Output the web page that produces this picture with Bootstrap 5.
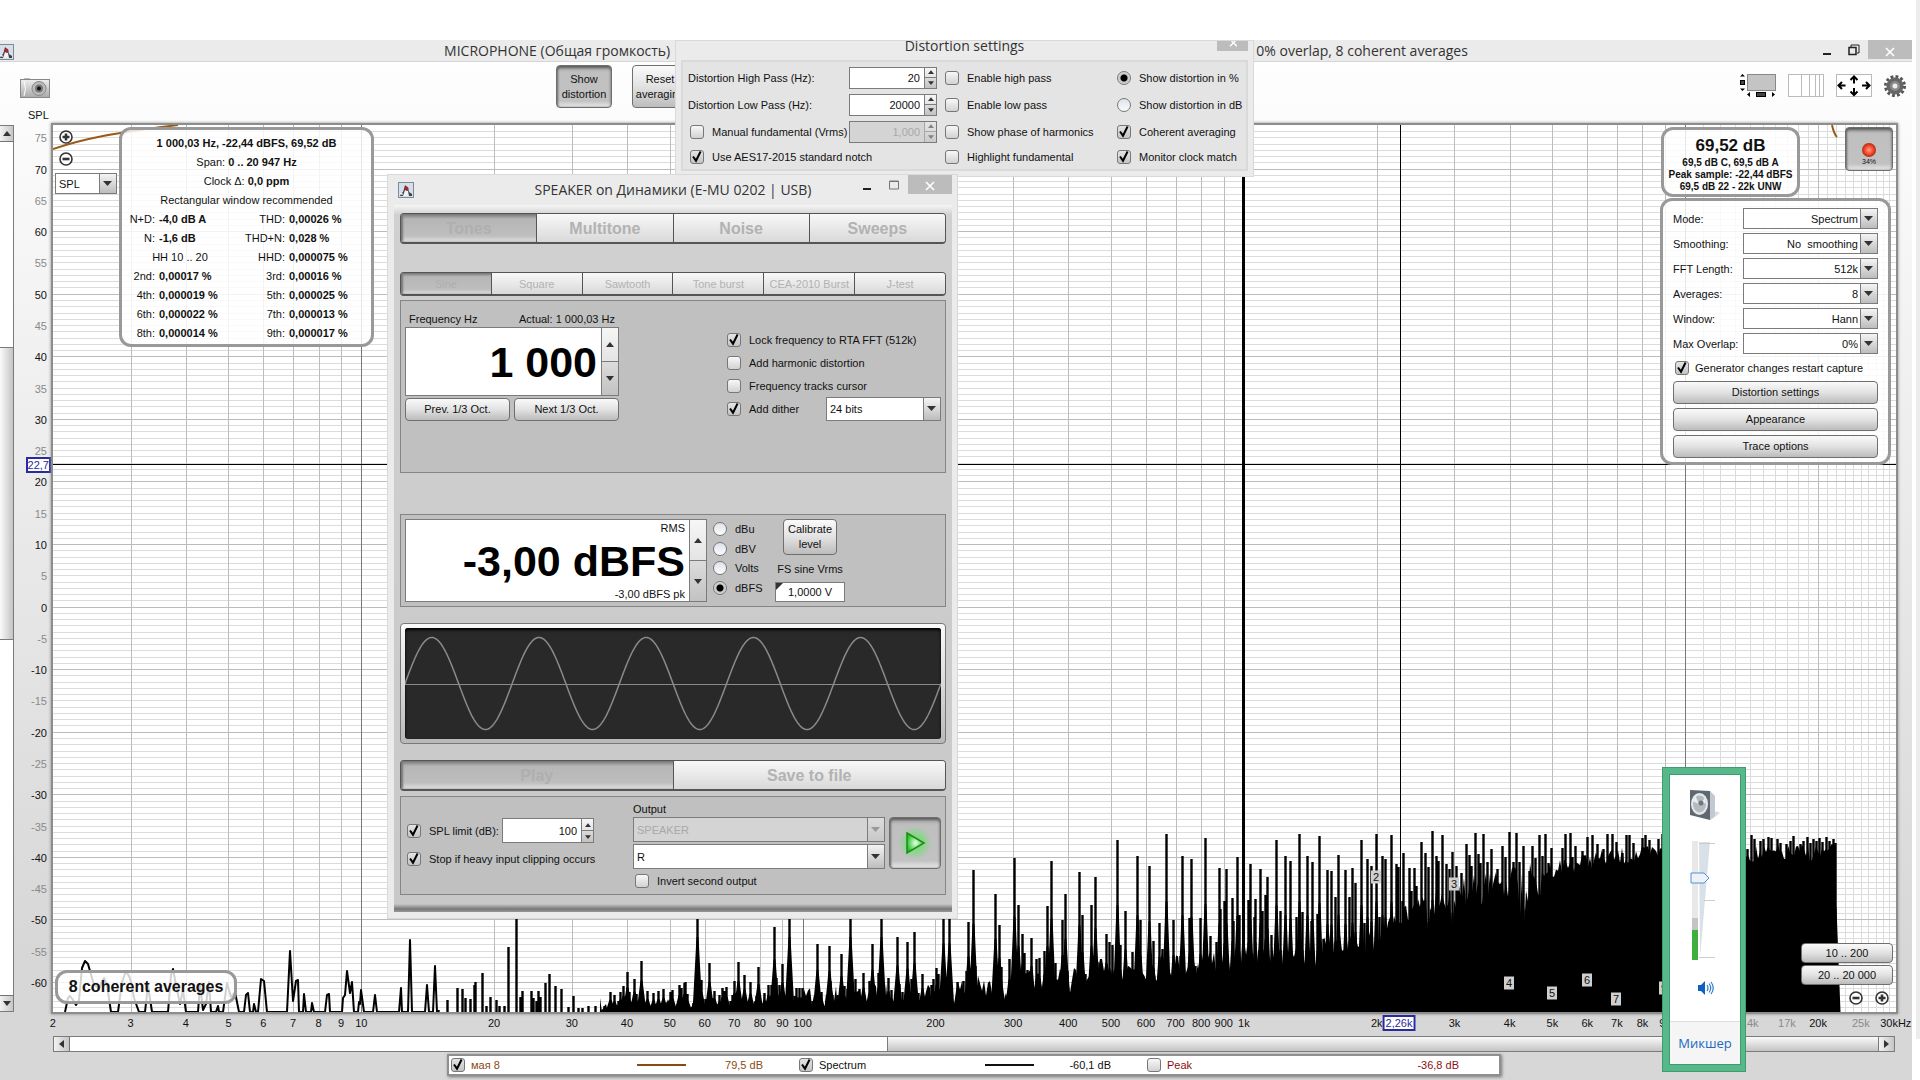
<!DOCTYPE html>
<html lang="en">
<head>
<meta charset="utf-8">
<meta name="viewport" content="width=device-width, initial-scale=1">
<title>RTA - Spectrum</title>
<link href="https://cdn.jsdelivr.net/npm/bootstrap@5.3.0/dist/css/bootstrap.min.css" rel="stylesheet">
<style>
:root{--edge:#7b7b7b;--btn:linear-gradient(#fafafa,#e2e2e2 50%,#bcbcbc);--ui:"Liberation Sans",Arial,sans-serif;--cap:"Open Sans","Noto Sans",sans-serif}
body{font:11px/16px var(--ui);color:#111;background:#fff;min-height:100vh;overflow:hidden}
button,input,select{font:inherit;color:inherit}
.shell{min-height:100vh;padding-top:40px;padding-right:8px}
.mainwin{background:linear-gradient(#fff,#f1f1f1 30%,#d7d7d7 88%)}
.edge-strip{right:0;top:0;width:4px;height:1039px;background:#ececec}
.capbar{height:22px;background:#ebebeb;border-bottom:1px solid #d6d6d6;font:14px/22px var(--cap);color:#333}
.capgap{gap:586px}
.winx{background:#bcbcbc;border:0;width:44px;height:19px;padding:0}
.winb{background:none;border:0;padding:0;line-height:0}
.tools{height:61px}
.toolset{margin:3px 0 0 506px}
.icons{padding:12px 2px 0 0}
.rbtn{background:var(--btn);border:1px solid #6f6f6f;border-radius:4px;padding:0;color:#111;line-height:15px}
.rbtn.pressed{background:linear-gradient(#aaa,#bfbfbf 15%,#c2c2c2 85%,#e9e9e9);box-shadow:inset 0 2px 3px #5a5a5a,inset 1px 0 2px #888}
.tbtn{width:56px;height:43px}
.spl-title{margin-left:28px}
.vscroll{width:14px;border:1px solid var(--edge);border-left:0;background:#fff;margin:2px 0}
.vscroll button,.hscroll button{border:0;padding:0;line-height:0;background:linear-gradient(90deg,#f2f2f2,#c6c6c6)}
.vscroll button{height:15px}
.vthumb{border:1px solid var(--edge);border-width:1px 0;background:linear-gradient(90deg,#fafafa,#c4c4c4)}
.yaxis{width:37px}
.yaxis span{right:4px;transform:translateY(-50%)}
.yaxis .cursor-tag{right:0}
.dim{color:#8a8a8a}
.plotbox{border:2px solid #8d8d8d;box-shadow:0 0 3px #888;background:#fff;margin-right:14px}
.plotbox>svg{width:100%;height:100%}
.xaxis{height:22px;margin:0 16px 0 53px}
.xaxis span{top:2px;line-height:14px;transform:translateX(-50%)}
.cursor-tag{border:2px solid #2a2aa0;background:#fff;color:#2a2aa0;line-height:12px!important}
.xaxis .cursor-tag{top:1px;padding:0 1px}
.hscroll{height:16px;border:1px solid var(--edge);background:#fff;margin:0 17px 0 53px}
.hscroll button{width:15px}
.hthumb{border:1px solid var(--edge);border-width:0 1px;background:linear-gradient(#fafafa,#c4c4c4)}
.legendbox{width:1054px;height:22px;margin:2px auto 4px 447px;padding-right:6px;border:2px solid #8f8f8f;box-shadow:1px 1px 3px #777;background:#fff}
.legendbox>div{padding:0 34px 0 2px}
.legendbox label{gap:6px}
.lvl{width:77px;text-align:right}
.swatch{width:49px;height:2px;background:currentColor}
.brown{color:#8a4a10}.darkred{color:#8c1010}
.tick{appearance:none;width:14px;height:14px;margin:0;flex:none;border:1px solid #777;border-radius:3px;background:linear-gradient(#f8f8f8,#d2d2d2)}
.tick:checked{background:url("data:image/svg+xml,%3Csvg xmlns='http://www.w3.org/2000/svg' viewBox='0 0 14 14'%3E%3Cpath d='M3 6.5l3 4.2L10.6 1.5' fill='none' stroke='%23000' stroke-width='2'/%3E%3C/svg%3E") center/14px,linear-gradient(#e4e4e4,#c4c4c4)}
.dot{appearance:none;width:14px;height:14px;margin:0;flex:none;border:1px solid #777;border-radius:50%;background:linear-gradient(#dfe3ea,#fafbfd)}
.dot:checked{background:radial-gradient(circle,#000 0 3px,#c4c4c4 4px,#f0f0f0)}
.pick{appearance:none;border:1px solid var(--edge);border-radius:0;padding:0 20px 0 3px;color:#111;height:21px;opacity:1;
 background:url("data:image/svg+xml,%3Csvg xmlns='http://www.w3.org/2000/svg' width='9' height='6'%3E%3Cpath d='M0 0h9L4.500 5z' fill='%23333'/%3E%3C/svg%3E") right 4px center no-repeat,linear-gradient(#f4f4f4,#bdbdbd) right/16px 100% no-repeat,linear-gradient(var(--edge),var(--edge)) right 16px top/1px 100% no-repeat,#fff}
.pick.rt{text-align-last:right;padding-right:19px}
.pick.tall{height:25px}
.pick:disabled{color:#a9a9a9;background:url("data:image/svg+xml,%3Csvg xmlns='http://www.w3.org/2000/svg' width='9' height='6'%3E%3Cpath d='M0 0h9L4.500 5z' fill='%23999'/%3E%3C/svg%3E") right 4px center no-repeat,linear-gradient(#dcdcdc,#c8c8c8) right/16px 100% no-repeat,linear-gradient(var(--edge),var(--edge)) right 16px top/1px 100% no-repeat,#d4d4d4}
.spin{border:1px solid var(--edge);background:#fff}
.spin input{border:0;background:none;text-align:right;width:0;min-width:0;padding:0 4px;outline:0}
.spin .arrows{flex:none;width:12px;border-left:1px solid var(--edge);display:grid;grid-template-columns:1fr}
.spin .arrows.wide{width:17px}
.arrows button{border:0;padding:0;line-height:0;background:linear-gradient(#f6f6f6,#e4e4e4)}
.arrows button+button{border-top:1px solid var(--edge);background:linear-gradient(#dcdcdc,#c2c2c2)}
.spin.off{background:#d4d4d4;color:#a9a9a9}
.ovl{border:3px solid #999;border-radius:12px;background:rgba(255,255,255,.82)}
.zoomset{padding:5px 0 0 2px}
.zoomset .pick{width:62px;margin-top:7px}
.infobox{left:66px;top:2px;width:255px;height:220px;padding-top:4px;line-height:19px}
.infogrid{display:grid;grid-template-columns:33px 79px 43px 1fr;column-gap:4px}
.infogrid .hh{grid-column:1/3;text-align:center}
.levelbox{right:96px;top:2px;width:139px;height:70px;font:bold 10px/12px var(--ui);padding-top:5px}
.levelbig{font-size:17px;line-height:22px}
.recbtn{right:3px;top:2px;width:48px;height:44px;font-size:7px;line-height:8px}
.optbox{right:5px;top:73px;width:231px;height:267px;padding:7px 10px}
.optbox .pick{width:135px}
.optrow{height:21px;margin-bottom:4px}
.optcheck{height:19px;margin-bottom:4px;padding-left:2px;gap:6px}
.wbtn{height:23px}
.avgbox{left:2px;bottom:8px;width:182px;height:34px;font:bold 16px/28px var(--ui)}
.zoomb{background:none;border:0;padding:0;line-height:0}
.rangebtns{right:3px;bottom:7px;width:92px;row-gap:2px}
.rangebtns .rbtn{height:20px}
.harm{background:#cfcfcf;width:10px;height:13px;line-height:13px;transform:translate(-50%,-50%)}
.win{background:#ebebeb;border:1px solid #d9d9d9}
.capt{font-family:var(--cap);font-size:14px;color:#333}
.distwin{left:675px;top:40px;width:579px;height:137px;padding:0 5px}
.distcap{height:19px;line-height:10px}
.distx{width:31px;height:10px}
.distgrid{border:2px solid #d9d9d9;background:#e4e4e4;height:111px;padding:2px 0 0 5px;display:grid;grid-template-columns:161px 96px 172px 1fr;grid-template-rows:27px 27px 27px 24px;align-items:center}
.distgrid .spin{width:88px;height:22px}
.inset{padding-left:2px}
.genwin{left:387px;top:174px;width:571px;height:745px;padding:0 5px 7px 6px}
.gencap{height:30px}
.geninner{height:707px;padding:8px 6px 0;background:linear-gradient(#f6f6f6,#d0d0d0 10px,#cfcfcf 100px,#c8c8c8 699px,#777 704px,#999)}
.seg{border:1px solid #555;border-bottom-width:2px;border-radius:4px;overflow:hidden}
.seg button{flex:1 1 0;border:0;padding:0;border-left:1px solid #555;background:linear-gradient(#f8f8f8,#d9d9d9);color:#b2b2b2}
.seg button:first-child{border-left:0;color:#afafaf;background:linear-gradient(#777,#b6b6b6 18%,#bebebe 78%,#e2e2e2);box-shadow:inset 2px 0 2px #777}
.seg.big{height:31px;font-weight:bold;font-size:16px}
.seg.big button{padding-top:2px}
.seg.sm{height:24px;margin-top:28px}
.pane{background:#c0c0c0;border:1px solid #858585}
.tonepane{height:173px}
.tonepane>.freq{width:214px;padding-top:10px}
.tonepane>.flags{width:214px;padding-top:27px}
.flags label{height:23px}
.flags .pick{width:115px;height:24px}
.freq .spin{height:69px}
.steps{margin-top:2px}
.levelpane{height:93px;margin-top:41px}
.levelpane>.spin{width:302px;height:83px}
.units{width:62px;margin-left:6px;padding-bottom:4px}
.calib{width:70px}
.calib .rbtn{width:54px;height:36px}
.calib label{padding-top:6px}
.calib .spin input{height:18px;text-align:center}
.num{font:bold 43px/50px var(--ui);color:#000}
.scope{border:1px solid #777;border-radius:4px;padding:4px;background:linear-gradient(#fafafa,#b9b9b9);height:121px}
.scope svg{background:#292929;border-radius:3px;width:100%;height:100%;box-shadow:inset 0 2px 3px #000}
.playpane{height:99px;margin-top:5px}
.limits{width:228px;padding:21px 0 0 2px}
.limits>div{width:187px}
.limits .spin{width:92px;height:25px}
.outs{padding-top:4px}
.outs .rbtn{width:52px}
.outs .rows{row-gap:2px}
.mixer{left:1662px;top:767px;width:84px;height:305px;background:#57b98a;border:1px solid #429a70;padding:6px}
.mixin{background:#fff;border:1px solid #429a70;padding-top:14px}
.mixfoot{height:43px;background:#f5f5f5;border-top:1px solid #ddd;font:13px/43px var(--cap);margin-top:auto}
.mixfoot a{color:#2268bd;text-decoration:none}
.volwrap{width:50px;height:119px;margin:20px 0 0 20px}
.volwrap input{appearance:none;width:119px;height:20px;left:0;top:119px;transform-origin:0 0;transform:rotate(-90deg);margin:0;
 background:linear-gradient(90deg,#3fae3f 25%,#c4c4c4 25% 35%,#e8e8e8 35%) 0 2px/100% 6px no-repeat}
.volwrap input::-webkit-slider-thumb{appearance:none;width:12px;height:20px;background:url("data:image/svg+xml,%3Csvg xmlns='http://www.w3.org/2000/svg' width='12' height='20'%3E%3Cpath d='M1 1h10v13l-5 5-5-5z' fill='%23eef2f8' stroke='%234a92dc'/%3E%3C/svg%3E")}
</style>
<script src="https://cdn.jsdelivr.net/npm/bootstrap@5.3.0/dist/js/bootstrap.bundle.min.js"></script>
</head>
<body class="position-relative">
<svg width="0" height="0" class="position-absolute">
  <defs>
    <symbol id="up" viewBox="0 0 8 5"><path d="M0 5L4 0l4 5z" fill="#333"/></symbol>
    <symbol id="dn" viewBox="0 0 8 5"><path d="M0 0h8L4 5z" fill="#333"/></symbol>
    <symbol id="xx" viewBox="0 0 10 10"><path d="M1 1l8 8M9 1L1 9" stroke="#fff" stroke-width="1.6"/></symbol>
    <symbol id="plus" viewBox="0 0 14 14"><circle cx="7" cy="7" r="6" fill="#fff" stroke="#333" stroke-width="1.6"/><path d="M3.500 7h7M7 3.500v7" stroke="#333" stroke-width="2.600"/></symbol>
    <symbol id="minus" viewBox="0 0 14 14"><circle cx="7" cy="7" r="6" fill="#fff" stroke="#333" stroke-width="1.6"/><path d="M3.500 7h7" stroke="#333" stroke-width="2.600"/></symbol>
    <symbol id="duke" viewBox="0 0 16 16"><rect x=".5" y=".5" width="15" height="15" fill="#d5dfe9" stroke="#7d8a99"/><path d="M2 14l1-3 2-1 1-3 1-4 3 3 1 4 3 2v2z" fill="#3c4148"/><path d="M7 8l3 1 1 5H5z" fill="#f2f2f2"/><path d="M1 12l3-2 1 3z" fill="#eef2f6"/><circle cx="8.500" cy="6.500" r="2" fill="#b32027"/></symbol>
    <linearGradient id="met" x2="0" y2="1"><stop stop-color="#eee"/><stop offset="1" stop-color="#a9a9a9"/></linearGradient>
    <radialGradient id="led"><stop stop-color="#ff9d85"/><stop offset=".6" stop-color="#f4482c"/><stop offset="1" stop-color="#b02a15"/></radialGradient>
    <radialGradient id="grn"><stop stop-color="#e4ffe0"/><stop offset="1" stop-color="#2fc42f"/></radialGradient>
    <radialGradient id="halo"><stop stop-color="#58e858"/><stop offset="1" stop-color="#58e858" stop-opacity="0"/></radialGradient>
  </defs>
</svg>

<div class="shell d-flex flex-column">
<main class="mainwin flex-grow-1 d-flex flex-column">
  <header class="capbar position-relative d-flex justify-content-center">
    <svg class="position-absolute start-0 top-0 mt-1" width="14" height="16" viewBox="2 0 14 16"><use href="#duke" width="16" height="16"/></svg>
    <div class="capgap d-flex text-nowrap"><span>MICROPHONE (Общая громкость)</span><span>0% overlap, 8 coherent averages</span></div>
    <div class="position-absolute end-0 top-0 d-flex align-items-center">
      <button class="winb me-3" aria-label="Minimize"><svg width="10" height="12"><path d="M1 10h8" stroke="#222" stroke-width="2"/></svg></button>
      <button class="winb me-2" aria-label="Restore"><svg width="12" height="12"><path d="M3 3V1h8v8H9" fill="none" stroke="#222"/><rect x="1" y="3.500" width="7" height="7" fill="none" stroke="#222" stroke-width="1.500"/></svg></button>
      <button class="winx" aria-label="Close"><svg width="10" height="10"><use href="#xx"/></svg></button>
    </div>
  </header>
  <div class="tools position-relative d-flex">
    <svg class="mt-3 ms-3" width="34" height="22" viewBox="-4 1 34 22"><rect x="4" y="1" width="6" height="3" fill="#bbb"/><rect x=".5" y="2.500" width="29" height="18" fill="url(#met)" stroke="#888"/><path d="M4 4q3 8 0 15" stroke="#fff" fill="none"/><circle cx="19" cy="11.500" r="7" fill="#bbb" stroke="#888"/><circle cx="19" cy="11.500" r="4" fill="#777"/><circle cx="19" cy="11.500" r="2" fill="#111"/></svg>
    <div class="toolset d-flex gap-3">
      <button class="rbtn tbtn pressed me-1">Show distortion</button>
      <button class="rbtn tbtn">Reset averaging</button>
    </div>
    <div class="icons ms-auto d-flex align-items-start">
      <svg width="36" height="24" viewBox="0 0 36 24"><rect x="7.500" y=".5" width="28" height="16" fill="#c4c4c4" stroke="#888"/><path d="M0 2.500L2.500 0 5 2.500zM0 14.500L2.500 17 5 14.500zM10 18l-3 2.500 3 2.500zM32 18l3 2.500-3 2.500z"/><rect x=".5" y="6.500" width="4" height="4" fill="#444" stroke="#000"/><rect x="16.500" y="18.500" width="9" height="4" fill="#444" stroke="#000"/></svg>
      <svg class="mx-2" width="44" height="24" viewBox="-4 0 44 24"><rect x=".5" y=".5" width="35" height="22" fill="#fff" stroke="#bbb"/><path d="M13.500 0v23M21.500 0v23M27.500 0v23M31.500 0v23" stroke="#bbb"/></svg>
      <svg width="36" height="24" viewBox="0 0 36 24"><rect x=".5" y=".5" width="35" height="22" fill="#fff" stroke="#bbb"/><path d="M2.500 11.500h7M26 11.500h7M18 2.500v7M18 14v7M6 8l-3.500 3.500L6 15M30 8l3.500 3.500L30 15M14.500 6L18 2.500 21.500 6M14.500 17.500L18 21l3.500-3.500" fill="none" stroke="#000" stroke-width="2"/></svg>
      <svg class="ms-2 me-1" width="26" height="24" viewBox="-4 0 26 24"><circle cx="11" cy="12" r="9.500" fill="none" stroke="#555" stroke-width="3" stroke-dasharray="2.800 2.200"/><circle cx="11" cy="12" r="8.500" fill="#666"/><circle cx="11" cy="12" r="5" fill="#8a8a8a"/><circle cx="11" cy="12" r="2.500" fill="#eee"/></svg>
    </div>
    <span class="spl-title position-absolute bottom-0 start-0">SPL</span>
  </div>

  <div class="flex-grow-1 d-flex">
    <div class="vscroll d-flex flex-column">
      <button aria-label="Scroll up"><svg width="8" height="5"><use href="#up"/></svg></button>
      <div class="border-bottom border-secondary"></div>
      <div style="flex:206"></div><div class="vthumb" style="flex:292"></div><div style="flex:357"></div>
      <div class="border-bottom border-secondary"></div>
      <button aria-label="Scroll down"><svg width="8" height="5"><use href="#dn"/></svg></button>
    </div>
    <div id="yaxis" class="yaxis position-relative"></div>
    <section class="plotbox flex-grow-1 position-relative">
      <svg id="plot" class="position-absolute top-0 start-0" viewBox="0 0 1843 887" preserveAspectRatio="none" aria-label="Spectrum plot"></svg>
      <div id="harmonics"></div>

      <div class="zoomset position-absolute top-0 start-0 d-flex flex-column">
        <button class="zoomb align-self-start ms-1" aria-label="Zoom in"><svg width="14" height="14"><use href="#plus"/></svg></button>
        <button class="zoomb align-self-start ms-1 mt-2" aria-label="Zoom out"><svg width="14" height="14"><use href="#minus"/></svg></button>
        <select class="pick" aria-label="Vertical axis"><option>SPL</option></select>
      </div>

      <div class="ovl infobox position-absolute">
        <div class="text-center">
          <div class="fw-bold text-nowrap">1 000,03 Hz, -22,44 dBFS, 69,52 dB</div>
          <div>Span: <b>0 .. 20 947 Hz</b></div>
          <div>Clock Δ: <b>0,0 ppm</b></div>
          <div>Rectangular window recommended</div>
        </div>
        <div class="infogrid text-nowrap">
          <div class="text-end">N+D:</div><b>-4,0 dB A</b><div class="text-end">THD:</div><b>0,00026 %</b>
          <div class="text-end">N:</div><b>-1,6 dB</b><div class="text-end">THD+N:</div><b>0,028 %</b>
          <div class="hh">HH 10 .. 20</div><div class="text-end">HHD:</div><b>0,000075 %</b>
          <div class="text-end">2nd:</div><b>0,00017 %</b><div class="text-end">3rd:</div><b>0,00016 %</b>
          <div class="text-end">4th:</div><b>0,000019 %</b><div class="text-end">5th:</div><b>0,000025 %</b>
          <div class="text-end">6th:</div><b>0,000022 %</b><div class="text-end">7th:</div><b>0,000013 %</b>
          <div class="text-end">8th:</div><b>0,000014 %</b><div class="text-end">9th:</div><b>0,000017 %</b>
        </div>
      </div>

      <div class="ovl levelbox position-absolute text-center text-nowrap">
        <div class="levelbig">69,52 dB</div><div>69,5 dB C, 69,5 dB A</div><div>Peak sample: -22,44 dBFS</div><div>69,5 dB 22 - 22k UNW</div>
      </div>
      <button class="rbtn pressed recbtn position-absolute d-flex flex-column align-items-center justify-content-end pb-1" aria-label="Record"><svg width="16" height="16"><circle cx="8" cy="8" r="7" fill="url(#led)"/></svg><span>34%</span></button>

      <div class="ovl optbox position-absolute">
        <div class="optrow d-flex align-items-center justify-content-between"><label for="o1">Mode:</label><select id="o1" class="pick rt"><option>Spectrum</option></select></div>
        <div class="optrow d-flex align-items-center justify-content-between"><label for="o2">Smoothing:</label><select id="o2" class="pick rt"><option>No&nbsp; smoothing</option></select></div>
        <div class="optrow d-flex align-items-center justify-content-between"><label for="o3">FFT Length:</label><select id="o3" class="pick rt"><option>512k</option></select></div>
        <div class="optrow d-flex align-items-center justify-content-between"><label for="o4">Averages:</label><select id="o4" class="pick rt"><option>8</option></select></div>
        <div class="optrow d-flex align-items-center justify-content-between"><label for="o5">Window:</label><select id="o5" class="pick rt"><option>Hann</option></select></div>
        <div class="optrow d-flex align-items-center justify-content-between"><label for="o6">Max Overlap:</label><select id="o6" class="pick rt"><option>0%</option></select></div>
        <label class="optcheck d-flex align-items-center text-nowrap"><input class="tick" type="checkbox" checked>Generator changes restart capture</label>
        <div class="d-grid gap-1">
          <button class="rbtn wbtn">Distortion settings</button><button class="rbtn wbtn">Appearance</button><button class="rbtn wbtn">Trace options</button>
        </div>
      </div>

      <div class="ovl avgbox position-absolute text-center text-nowrap">8 coherent averages</div>
      <div class="rangebtns position-absolute d-grid">
        <button class="rbtn">10 .. 200</button><button class="rbtn">20 .. 20 000</button>
        <div class="d-flex justify-content-end gap-2 mt-1 pe-1">
          <button class="zoomb me-1" aria-label="Zoom out frequency"><svg width="14" height="14"><use href="#minus"/></svg></button>
          <button class="zoomb" aria-label="Zoom in frequency"><svg width="14" height="14"><use href="#plus"/></svg></button>
        </div>
      </div>
    </section>
  </div>

  <div id="xaxis" class="xaxis position-relative"></div>
  <div class="hscroll d-flex">
    <button aria-label="Scroll left"><svg width="5" height="8"><path d="M5 0L0 4l5 4z" fill="#333"/></svg></button>
    <div class="border-end border-secondary"></div>
    <div style="flex:819"></div><div class="hthumb" style="flex:992"></div>
    <button aria-label="Scroll right"><svg width="5" height="8"><path d="M0 0l5 4-5 4z" fill="#333"/></svg></button>
  </div>
  <div class="legendbox d-flex">
    <div class="col-4 d-flex align-items-center brown"><label class="d-flex align-items-center"><input class="tick" type="checkbox" checked>мая 8</label><i class="swatch ms-auto"></i><span class="lvl">79,5 dB</span></div>
    <div class="col-4 d-flex align-items-center"><label class="d-flex align-items-center"><input class="tick" type="checkbox" checked>Spectrum</label><i class="swatch ms-auto"></i><span class="lvl">-60,1 dB</span></div>
    <div class="col-4 d-flex align-items-center darkred"><label class="d-flex align-items-center"><input class="tick" type="checkbox">Peak</label><span class="ms-auto">-36,8 dB</span></div>
  </div>
</main>
</div>
<div class="edge-strip position-absolute"></div>

<section class="win distwin position-absolute">
  <div class="distcap capt position-relative text-center">Distortion settings
    <button class="winx distx position-absolute top-0 end-0 d-flex justify-content-center" aria-label="Close"><svg width="8" height="6" viewBox="0 3 9 7"><use href="#xx" width="10" height="10"/></svg></button></div>
  <div class="distgrid text-nowrap">
    <label for="d1">Distortion High Pass (Hz):</label>
    <div class="spin d-flex"><input id="d1" class="flex-grow-1" value="20"><span class="arrows"><button aria-label="Up"><svg width="6" height="4"><use href="#up"/></svg></button><button aria-label="Down"><svg width="6" height="4"><use href="#dn"/></svg></button></span></div>
    <label class="d-flex align-items-center"><input class="tick me-1" type="checkbox"><span class="ps-1">Enable high pass</span></label>
    <label class="d-flex align-items-center"><input class="dot me-1" type="radio" name="dist" checked><span class="ps-1">Show distortion in %</span></label>
    <label for="d2">Distortion Low Pass (Hz):</label>
    <div class="spin d-flex"><input id="d2" class="flex-grow-1" value="20000"><span class="arrows"><button aria-label="Up"><svg width="6" height="4"><use href="#up"/></svg></button><button aria-label="Down"><svg width="6" height="4"><use href="#dn"/></svg></button></span></div>
    <label class="d-flex align-items-center"><input class="tick me-1" type="checkbox"><span class="ps-1">Enable low pass</span></label>
    <label class="d-flex align-items-center"><input class="dot me-1" type="radio" name="dist"><span class="ps-1">Show distortion in dB</span></label>
    <label class="inset d-flex align-items-center"><input class="tick me-1" type="checkbox"><span class="ps-1">Manual fundamental (Vrms)</span></label>
    <div class="spin off d-flex"><input class="flex-grow-1" value="1,000" disabled aria-label="Fundamental Vrms"><span class="arrows opacity-50"><button disabled aria-label="Up"><svg width="6" height="4"><use href="#up"/></svg></button><button disabled aria-label="Down"><svg width="6" height="4"><use href="#dn"/></svg></button></span></div>
    <label class="d-flex align-items-center"><input class="tick me-1" type="checkbox"><span class="ps-1">Show phase of harmonics</span></label>
    <label class="d-flex align-items-center"><input class="tick me-1" type="checkbox" checked><span class="ps-1">Coherent averaging</span></label>
    <label class="inset d-flex align-items-center"><input class="tick me-1" type="checkbox" checked><span class="ps-1">Use AES17-2015 standard notch</span></label><span></span>
    <label class="d-flex align-items-center"><input class="tick me-1" type="checkbox"><span class="ps-1">Highlight fundamental</span></label>
    <label class="d-flex align-items-center"><input class="tick me-1" type="checkbox" checked><span class="ps-1">Monitor clock match</span></label>
  </div>
</section>

<section class="win genwin position-absolute">
  <div class="gencap capt position-relative d-flex align-items-center justify-content-center">
    <svg class="position-absolute start-0 ms-1" width="16" height="16"><use href="#duke"/></svg>
    SPEAKER on Динамики (E-MU 0202 | USB)
    <div class="position-absolute end-0 top-0 d-flex align-items-center">
      <button class="winb me-3" aria-label="Minimize"><svg width="10" height="12"><path d="M1 10h8" stroke="#222" stroke-width="2"/></svg></button>
      <button class="winb me-2" aria-label="Maximize"><svg width="12" height="12"><path d="M1.500 2h9v8h-9z" fill="none" stroke="#777"/><path d="M1 2.500h10" stroke="#777"/></svg></button>
      <button class="winx" aria-label="Close"><svg width="10" height="10"><use href="#xx"/></svg></button>
    </div>
  </div>
  <div class="geninner d-flex flex-column">
    <div class="seg big d-flex"><button>Tones</button><button>Multitone</button><button>Noise</button><button>Sweeps</button></div>
    <div class="seg sm d-flex text-nowrap"><button>Sine</button><button>Square</button><button>Sawtooth</button><button>Tone burst</button><button>CEA-2010 Burst</button><button>J-test</button></div>
    <div class="pane tonepane d-flex justify-content-between mt-1 px-1">
      <div class="freq">
        <div class="d-flex justify-content-between px-1"><label for="fq">Frequency Hz</label><span>Actual: 1 000,03 Hz</span></div>
        <div class="spin d-flex"><input id="fq" class="num flex-grow-1" value="1 000"><span class="arrows wide"><button aria-label="Up"><svg width="8" height="5"><use href="#up"/></svg></button><button aria-label="Down"><svg width="8" height="5"><use href="#dn"/></svg></button></span></div>
        <div class="steps d-flex gap-1"><button class="rbtn wbtn w-50">Prev. 1/3 Oct.</button><button class="rbtn wbtn w-50">Next 1/3 Oct.</button></div>
      </div>
      <div class="flags d-flex flex-column text-nowrap">
        <label class="d-flex align-items-center"><input class="tick me-1" type="checkbox" checked><span class="ps-1">Lock frequency to RTA FFT (512k)</span></label>
        <label class="d-flex align-items-center"><input class="tick me-1" type="checkbox"><span class="ps-1">Add harmonic distortion</span></label>
        <label class="d-flex align-items-center"><input class="tick me-1" type="checkbox"><span class="ps-1">Frequency tracks cursor</span></label>
        <div class="d-flex align-items-center justify-content-between"><label class="d-flex align-items-center"><input class="tick me-1" type="checkbox" checked><span class="ps-1">Add dither</span></label><select class="pick" aria-label="Dither bits"><option>24 bits</option></select></div>
      </div>
    </div>
    <div class="pane levelpane d-flex p-1">
      <div class="spin d-flex"><div class="flex-grow-1 d-flex flex-column text-end"><span class="pe-1">RMS</span><input class="num w-100" value="-3,00 dBFS" aria-label="Level"><span class="pe-1">-3,00 dBFS pk</span></div><span class="arrows wide"><button aria-label="Up"><svg width="8" height="5"><use href="#up"/></svg></button><button aria-label="Down"><svg width="8" height="5"><use href="#dn"/></svg></button></span></div>
      <div class="units d-flex flex-column justify-content-around">
        <label class="d-flex align-items-center"><input class="dot me-1" type="radio" name="unit"><span class="ps-1">dBu</span></label>
        <label class="d-flex align-items-center"><input class="dot me-1" type="radio" name="unit"><span class="ps-1">dBV</span></label>
        <label class="d-flex align-items-center"><input class="dot me-1" type="radio" name="unit"><span class="ps-1">Volts</span></label>
        <label class="d-flex align-items-center"><input class="dot me-1" type="radio" name="unit" checked><span class="ps-1">dBFS</span></label>
      </div>
      <div class="calib d-flex flex-column align-items-center">
        <button class="rbtn">Calibrate level</button>
        <label for="fs" class="text-nowrap mb-auto">FS sine Vrms</label>
        <div class="spin position-relative w-100"><svg class="position-absolute start-0 top-0" width="7" height="7"><path d="M0 0h7L0 7z" fill="#333"/></svg><input id="fs" class="w-100" value="1,0000 V"></div>
      </div>
    </div>
    <div class="scope mt-3"><svg viewBox="0 0 536 111" preserveAspectRatio="none"><path d="M0 56.500h536" stroke="#8a8a8a"/><path id="sine" fill="none" stroke="#8a8a8a" stroke-width="1.500"/></svg></div>
    <div class="seg big d-flex mt-3"><button>Play</button><button>Save to file</button></div>
    <div class="pane playpane d-flex px-1">
      <div class="limits">
        <div class="d-flex align-items-center justify-content-between"><label class="d-flex align-items-center" for="lim"><input class="tick me-1" type="checkbox" checked aria-label="Enable SPL limit"><span class="ps-1">SPL limit (dB):</span></label>
        <div class="spin d-flex"><input id="lim" class="flex-grow-1" value="100"><span class="arrows"><button aria-label="Up"><svg width="6" height="4"><use href="#up"/></svg></button><button aria-label="Down"><svg width="6" height="4"><use href="#dn"/></svg></button></span></div></div>
        <label class="d-flex align-items-center mt-2 text-nowrap"><input class="tick me-1" type="checkbox" checked><span class="ps-1">Stop if heavy input clipping occurs</span></label>
      </div>
      <div class="outs flex-grow-1 d-flex flex-column">
        <label for="out">Output</label>
        <div class="d-flex gap-1">
          <div class="rows flex-grow-1 d-grid">
            <select id="out" class="pick tall w-100" disabled><option>SPEAKER</option></select>
            <select class="pick tall w-100" aria-label="Channel"><option>R</option></select>
          </div>
          <button class="rbtn pressed" aria-label="Play"><svg width="40" height="40" viewBox="-20 -20 40 40"><circle r="17" fill="url(#halo)"/><path d="M-8-10L9 0-8 10z" fill="url(#grn)" stroke="#1c8a1c" stroke-width="1.500"/></svg></button>
        </div>
        <label class="inset d-flex align-items-center mt-1"><input class="tick me-1" type="checkbox"><span class="ps-1">Invert second output</span></label>
      </div>
    </div>
  </div>
</section>

<section class="mixer position-absolute d-flex">
  <div class="mixin flex-grow-1 d-flex flex-column">
    <svg class="mx-auto" width="30" height="32" viewBox="1 0 30 32"><path d="M27 22l4 2-9 7z" fill="#ddd"/><path d="M1 1l20 2 5 4v20l-5 4z" fill="#dfe3e7"/><path d="M21 2l5 5v20l-5 4z" fill="#c3c9d0"/><path d="M1 1l20 1v29L1 26z" fill="#5f6871"/><ellipse cx="10.500" cy="15" rx="8.500" ry="11" fill="#e4e7ea"/><ellipse cx="10.500" cy="15" rx="6.500" ry="8.500" fill="#b4babf"/><path d="M10 15L3 12l3-6zM11 15l5-6 1 5z" fill="#e9ecee"/><circle cx="12" cy="14" r="2.500" fill="#6f7880"/></svg>
    <div class="volwrap position-relative">
      <svg class="position-absolute top-0 start-0" width="50" height="119"><path d="M9 1h11L10 117z" fill="#d9e1e8"/><path d="M9 2.500h16M14 59.500h11M9 116.500h16" stroke="#ccc"/></svg>
      <input class="position-absolute" type="range" min="0" max="100" value="71" aria-label="Volume">
    </div>
    <button class="zoomb mx-auto mt-3 pt-1" aria-label="Mute"><svg width="17" height="16"><path d="M1 5h3l4-4v14l-4-4H1z" fill="#0d62c0"/><path d="M10 5q2 3 0 6M12 3.500q3.500 4.500 0 9M14 2q4.500 6 0 12" fill="none" stroke="#2f7bd0" stroke-width="1.200"/></svg></button>
    <div class="mixfoot text-center"><a href="#">Микшер</a></div>
  </div>
</section>

<script>
const W = 1843, H = 887, X0 = 53, Y0 = 125;
const fx = f => 308.3 + 441.3 * (Math.log10(f) - 1);
const dy = d => 481.6 - 6.257 * d;
const pct = (v, t) => (v / t * 100).toFixed(3) + '%';

// grid
let light = '', mid = '', dark = '';
for (let d = -64; d <= 76; d++) { const s = `M0 ${Math.round(dy(d)) + .5}H${W}`; d % 10 ? light += s : mid += s; }
for (let dec = 1; dec <= 10000; dec *= 10) for (let k = 1; k < 10; k++) {
  const f = dec * k; if (f <= 2 || f > 30000) continue;
  const s = `M${Math.round(fx(f)) + .5} 0V${H}`; k === 1 ? dark += s : mid += s;
}
for (let f = 11000; f < 30000; f += 1000) if (f !== 20000) light += `M${Math.round(fx(f)) + .5} 0V${H}`;

// low-frequency trace, drawn as a smooth line
const low = [[65,1012],[68,998],[70,996],[73,1000],[76,1005],[79,1000],[82,968],[85,961],[88,964],[94,985],[99,988],[104,978],[107,985],[111,1012],[118,1012],[122,982],[126,971],[130,978],[134,998],[139,1012],[145,1012],[148,985],[152,1012],[168,1012],[171,975],[173,969],[176,985],[180,1004],[183,990],[186,1012],[198,1012],[200,985],[203,1010],[206,1004],[209,982],[211,1012],[216,1012],[218,1006],[219,1012],[223,1012],[227,983],[231,997],[235,992],[239,1012],[244,1012],[246,995],[248,993],[250,1012],[253,1012],[254,1004],[256,1012],[258,1012],[261,979],[264,981],[267,1012],[287,1012],[290,951],[293,1001],[296,981],[298,980],[299,1012],[303,1012],[304,994],[306,1012],[311,1012],[312,1003],[314,1012],[325,1012],[327,995],[329,994],[330,1012],[342,1012],[343,998],[345,995],[347,971],[350,993],[352,982],[354,1012],[358,1012],[359,1002],[360,1004],[361,990],[364,1012],[373,1012],[375,995],[377,1012],[399,1012],[401,988],[402,1012],[408,1012],[410,940],[412,1012],[425,1012],[427,985],[429,1012],[433,1012],[435,966],[437,1012]];
// spectral spikes: x, top
const pk = [393,1011,419,1010,438,1009,447,999,457,987,462,988,465,997,470,998,474,984,475,981,482,972,486,1005,490,996,496,999,499,1005,504,1005,508,946,516,900,520,996,522,990,531,990,533,997,536,1000,538,990,540,996,545,982,549,973,555,985,561,988,568,1006,573,995,578,1007,582,1007,588,1005,595,1005,604,1005,610,991,614,994,618,1000,620,991,623,985,627,971,629,991,632,1003,634,978,636,993,641,960,647,990,653,992,658,990,663,988,667,1001,670,991,672,989,677,1003,679,984,681,987,684,982,685,981,687,993,693,1002,697,890,701,979,705,998,709,962,712,997,714,990,719,994,722,987,724,990,726,986,730,1000,732,994,734,980,738,961,744,974,747,1003,750,981,756,995,758,966,764,992,768,984,771,984,774,926,776,977,779,984,782,963,787,982,789,890,791,994,794,995,796,987,799,987,802,987,804,998,808,1004,812,1000,817,943,821,991,826,1000,829,945,830,980,832,994,837,994,841,953,844,985,847,988,850,890,853,994,855,978,859,988,863,972,869,980,872,943,874,987,878,972,881,890,888,977,891,989,897,936,899,983,902,991,907,941,911,978,914,931,918,992,922,973,928,987,931,984,933,978,936,967,938,973,943,900,946,983,949,900,957,981,963,980,966,970,968,921,973,869,975,965,995,893,999,924,1001,966,1009,958,1014,857,1018,904,1022,933,1024,952,1027,969,1031,937,1036,958,1039,957,1044,950,1047,905,1051,860,1055,962,1062,919,1065,893,1067,970,1079,871,1082,914,1085,973,1091,904,1095,876,1097,961,1106,933,1109,941,1112,944,1117,839,1120,944,1125,910,1132,951,1137,855,1140,919,1149,865,1153,940,1159,922,1162,948,1166,833,1173,919,1180,955,1182,855,1189,917,1191,858,1195,965,1200,917,1204,941,1205,837,1210,935,1216,941,1219,867,1220,908,1224,900,1226,868,1232,897,1233,920,1237,856,1239,914,1248,899,1250,863,1254,916,1255,898,1260,868,1262,910,1265,894,1267,876,1271,934,1276,839,1280,910,1285,855,1290,860,1296,916,1299,833,1302,911,1307,855,1311,920,1312,861,1317,913,1319,835,1323,938,1327,869,1331,870,1335,896,1338,854,1345,869,1349,896,1352,867,1355,882,1361,839,1364,922,1367,858,1371,865,1376,833,1379,916,1382,855,1385,858,1391,834,1396,863,1398,866,1402,900,1403,852,1409,867,1411,890,1414,867,1416,885,1421,841,1423,908,1425,852,1428,866,1432,830,1436,855,1438,860,1442,834,1446,863,1449,868,1452,851,1456,865,1461,872,1466,843,1469,854,1471,865,1475,832,1478,853,1480,862,1483,833,1487,861,1491,848,1497,868,1502,845,1505,856,1509,831,1513,861,1516,832,1519,861,1523,845,1529,870,1532,845,1535,857,1539,834,1542,855,1545,833,1548,862,1551,847,1557,874,1562,847,1565,833,1570,832,1572,856,1575,845,1582,850,1587,836,1592,834,1597,843,1603,848,1607,833,1612,833,1616,841,1622,852,1626,834,1629,834,1633,842,1642,837,1645,834,1649,839,1658,838,1662,833,
1747,848,1751,834,1754,838,1760,840,1763,838,1768,836,1771,837,1777,838,1780,842,1786,843,1790,840,1793,835,1800,843,1803,840,1807,836,1810,842,1813,838,1816,840,1819,837,1822,841,1826,836,1829,840,1833,838,1835,842];
let spikes = '', skirts = '';
for (let i = 0; i < pk.length; i += 2) {
  const x = pk[i] - X0 + .5, top = pk[i + 1] - Y0 + 1;
  spikes += `M${x} ${H}V${top}`;
  // each line widens towards the noise floor
  if (pk[i] > 600) skirts += `M${x - 5} ${H}L${x - 1} ${H - (H - top) * .62}h2L${x + 5} ${H}z`;
}
// noise floor
const floor = [[600,1013],[700,1008],[800,1004],[900,996],[1000,988],[1060,982],[1100,974],[1160,966],[1240,958],[1300,958],[1340,944],[1380,930],[1420,910],[1460,892],[1520,880],[1560,868],[1600,860],[1660,855],[1740,856],[1837,854]];
let seed = 7; const rnd = () => (seed = (seed * 16807) % 2147483647) / 2147483647;
let fl = `M${600 - X0} ${H}`;
for (let x = 600; x <= 1837; x += 2) {
  const i = Math.max(1, floor.findIndex(p => p[0] >= x));
  const [a, b] = [floor[i - 1], floor[i]], t = (x - a[0]) / (b[0] - a[0]);
  let y = a[1] + t * (b[1] - a[1]);
  if (x > 1540) y += (rnd() - .6) * 18;
  else { y += (rnd() - .5) * 30; if (x > 1230 && rnd() < .2) y += rnd() * 55; }
  fl += `L${x - X0} ${Math.min(H, y - Y0).toFixed(1)}`;
}
fl += `V${H}Z`;
const P = (d, c, w, extra = '') => `<path d="${d}" fill="none" stroke="${c}" stroke-width="${w}" ${extra}/>`;
const crisp = 'shape-rendering="crispEdges"';
document.getElementById('plot').innerHTML =
  P(light, '#dcdcdc', 1, crisp) + P(mid, '#bcbcbc', 1, crisp) + P(dark, '#777', 1, crisp) +
  P('M0 24Q24 16 50 11T125 0M1779 0Q1781 9 1784 12', '#9a5a18', 2) +
  P('M' + low.map(p => `${p[0] - X0} ${p[1] - Y0}`).join('L'), '#000', 2, 'stroke-linejoin="round"') +
  P(spikes, '#000', 2.4) + `<path d="${skirts}"/><path d="${fl}"/>` +
  P(`M1190.500 ${H}V47`, '#000', 3) + P(`M0 339.500H${W}M1347.500 0V${H}`, '#000', 1, crisp);

document.getElementById('harmonics').innerHTML = [[2,1376,877],[3,1454,884],[4,1509,983],[5,1552,993],[6,1587,980],[7,1616,999],[9,1664,988]]
  .map(([n, x, y]) => `<span class="harm position-absolute text-center" style="left:${pct(x - X0, W)};top:${pct(y - Y0, H)}">${n}</span>`).join('');

// axis labels
let ya = '';
for (let d = 75; d >= -60; d -= 5) ya += `<span class="position-absolute ${d % 10 ? 'dim' : ''}" style="top:${pct(dy(d) + 3, H + 4)}">${d}</span>`;
ya += `<span class="position-absolute cursor-tag" style="top:${pct(342, H + 4)}">22,7</span>`;
document.getElementById('yaxis').innerHTML = ya;
const fr = [];
for (let k = 2; k <= 10; k++) fr.push([k, k]);
for (let k = 2; k <= 10; k++) fr.push([k * 10, k * 10]);
for (let k = 2; k <= 9; k++) fr.push([k * 100, k * 100]);
for (let k = 1; k <= 9; k++) fr.push([k * 1000, k + 'k']);
fr.push([14000, '14k', 1], [17000, '17k', 1], [20000, '20k'], [25000, '25k', 1], [30000, '30kHz']);
document.getElementById('xaxis').innerHTML = fr.map(([f, t, g]) =>
  `<span class="position-absolute ${g ? 'dim' : ''}" style="left:${pct(fx(f), W)}">${t}</span>`).join('') +
  `<span class="position-absolute cursor-tag" style="left:${pct(1346, W)}">2,26k</span>`;

let s = 'M0 56.500';
for (let x = 1; x <= 536; x++) s += `L${x} ${(55.5 - 46 * Math.sin(x / 536 * Math.PI * 10)).toFixed(2)}`;
document.getElementById('sine').setAttribute('d', s);
</script>
</body>
</html>
